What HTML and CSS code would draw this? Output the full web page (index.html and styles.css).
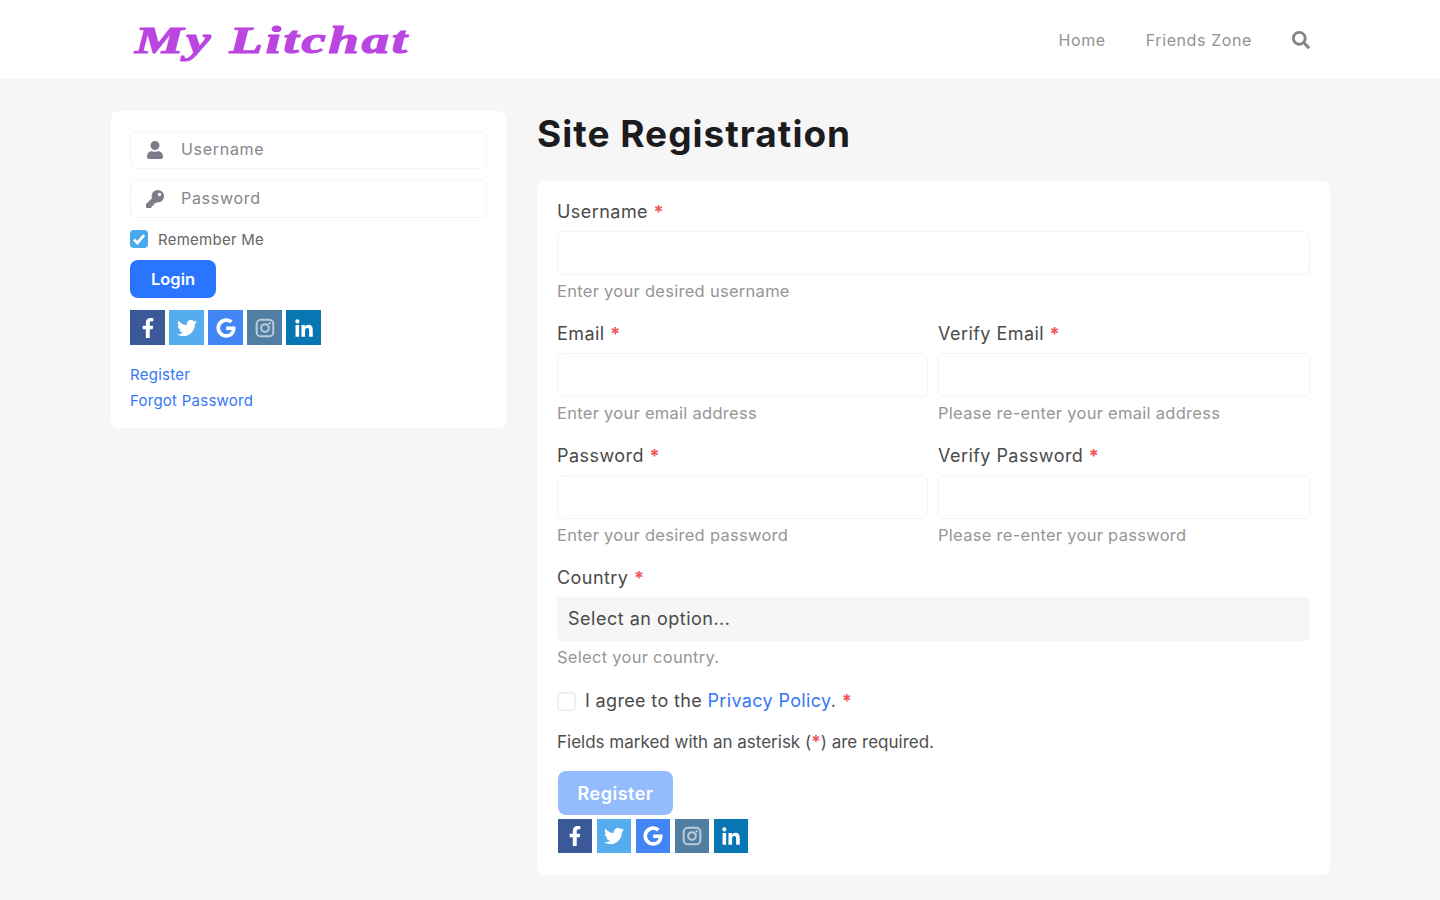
FILE: index.html
```html
<!DOCTYPE html>
<html>
<head>
    <title>My Litchat - Site Registration</title>
    <meta name="viewport" content="width=device-width, initial-scale=1.0">
    <link rel="stylesheet" href="styles.css">
</head>
<body>
    <svg class="defs" width="0" height="0">
        <symbol id="i-fb" viewBox="0 0 320 512"><path d="M279.14 288l14.22-92.66h-88.91v-60.13c0-25.35 12.42-50.06 52.24-50.06h40.42V6.26S260.43 0 225.36 0c-73.22 0-121.08 44.38-121.08 124.72v70.62H22.89V288h81.39v224h100.17V288z"/></symbol>
        <symbol id="i-tw" viewBox="0 0 512 512"><path d="M459.37 151.716c.325 4.548.325 9.097.325 13.645 0 138.72-105.583 298.558-298.558 298.558-59.452 0-114.68-17.219-161.137-47.106 8.447.974 16.568 1.299 25.34 1.299 49.055 0 94.213-16.568 130.274-44.832-46.132-.975-84.792-31.188-98.112-72.772 6.498.974 12.995 1.624 19.818 1.624 9.421 0 18.843-1.3 27.614-3.573-48.081-9.747-84.143-51.98-84.143-102.985v-1.299c13.969 7.797 30.214 12.67 47.431 13.319-28.264-18.843-46.781-51.005-46.781-87.391 0-19.492 5.197-37.36 14.294-52.954 51.655 63.675 129.3 105.258 216.365 109.807-1.624-7.797-2.599-15.918-2.599-24.04 0-57.828 46.782-104.934 104.934-104.934 30.213 0 57.502 12.67 76.67 33.137 23.715-4.548 46.456-13.32 66.599-25.34-7.798 24.366-24.366 44.833-46.132 57.827 21.117-2.273 41.584-8.122 60.426-16.243-14.292 20.791-32.161 39.308-52.628 54.253z"/></symbol>
        <symbol id="i-g" viewBox="0 0 488 512"><path d="M488 261.8C488 403.3 391.1 504 248 504 110.8 504 0 393.2 0 256S110.8 8 248 8c66.8 0 123 24.5 166.3 64.9l-67.5 64.9C258.5 52.6 94.3 116.6 94.3 256c0 86.5 69.1 156.6 153.7 156.6 98.2 0 135-70.4 140.8-106.9H248v-85.3h236.1c2.3 12.7 3.9 24.9 3.9 41.4z"/></symbol>
        <symbol id="i-ig" viewBox="0 0 24 24"><rect x="2" y="2" width="20" height="20" rx="5" fill="none" stroke="currentColor" stroke-width="2.4"/><circle cx="12" cy="12" r="4.6" fill="none" stroke="currentColor" stroke-width="2.4"/><circle cx="17.6" cy="6.4" r="1.4"/></symbol>
        <symbol id="i-in" viewBox="0 0 448 512"><path transform="translate(0 32)" d="M100.28 448H7.4V148.9h92.88zM53.79 108.1C24.09 108.1 0 83.5 0 53.8a53.79 53.79 0 0 1 107.58 0c0 29.7-24.1 54.3-53.79 54.3zM447.9 448h-92.68V302.4c0-34.7-.7-79.2-48.29-79.2-48.29 0-55.69 37.7-55.69 76.7V448h-92.78V148.9h89.08v40.8h1.3c12.4-23.5 42.69-48.3 87.88-48.3 94 0 111.28 61.9 111.28 142.3V448z"/></symbol>
        <symbol id="i-user" viewBox="0 0 448 512"><path d="M224 256c70.7 0 128-57.3 128-128S294.7 0 224 0 96 57.3 96 128s57.3 128 128 128zm89.6 32h-16.7c-22.2 10.2-46.9 16-72.9 16s-50.6-5.8-72.9-16h-16.7C60.2 288 0 348.2 0 422.4V464c0 26.5 21.5 48 48 48h352c26.5 0 48-21.5 48-48v-41.6c0-74.2-60.2-134.4-134.4-134.4z"/></symbol>
        <symbol id="i-key" viewBox="0 0 512 512"><path d="M512 176.001C512 273.203 433.202 352 336 352c-11.22 0-22.19-1.062-32.827-3.069l-24.012 27.014A23.999 23.999 0 0 1 261.223 384H224v40c0 13.255-10.745 24-24 24h-40v40c0 13.255-10.745 24-24 24H24c-13.255 0-24-10.745-24-24v-78.059c0-6.365 2.529-12.47 7.029-16.971l161.802-161.802C163.108 213.814 160 195.271 160 176 160 78.798 238.797.001 335.999 0 433.488-.001 512 78.511 512 176.001zM336 128c0 26.51 21.49 48 48 48s48-21.49 48-48-21.49-48-48-48-48 21.49-48 48z"/></symbol>
        <symbol id="i-search" viewBox="0 0 512 512"><path d="M505 442.7L405.3 343c-4.5-4.5-10.6-7-17-7H372c27.6-35.3 44-79.7 44-128C416 93.1 322.9 0 208 0S0 93.1 0 208s93.1 208 208 208c48.3 0 92.7-16.4 128-44v16.3c0 6.4 2.5 12.5 7 17l99.7 99.7c9.4 9.4 24.6 9.4 33.9 0l28.3-28.3c9.4-9.4 9.4-24.6.1-34zM208 336c-70.7 0-128-57.2-128-128 0-70.7 57.2-128 128-128 70.7 0 128 57.2 128 128 0 70.7-57.2 128-128 128z"/></symbol>
    </svg>

    <header class="topbar">
        <div class="topbar-inner">
            <a class="logo" href="#">My Litchat</a>
            <nav class="menu">
                <a href="#">Home</a>
                <a href="#">Friends Zone</a>
                <a href="#" class="menu-search"><svg><use href="#i-search"/></svg></a>
            </nav>
        </div>
    </header>

    <div class="wrap">
        <aside class="card login">
            <div class="login-field">
                <svg class="user-icon"><use href="#i-user"/></svg>
                <input type="text" placeholder="Username">
            </div>
            <div class="login-field">
                <svg class="key-icon"><use href="#i-key"/></svg>
                <input type="password" placeholder="Password">
            </div>
            <label class="remember">
                <span class="tick"><svg viewBox="0 0 16 16"><path d="M3.5 8.5l3 3 6-7" fill="none" stroke="#fff" stroke-width="2.4"/></svg></span>
                Remember Me
            </label>
            <button class="btn btn-login" type="button">Login</button>
            <div class="social social-login">
                <a class="fb" href="#"><svg><use href="#i-fb"/></svg></a>
                <a class="tw" href="#"><svg><use href="#i-tw"/></svg></a>
                <a class="gg" href="#"><svg><use href="#i-g"/></svg></a>
                <a class="ig" href="#"><svg><use href="#i-ig"/></svg></a>
                <a class="li" href="#"><svg><use href="#i-in"/></svg></a>
            </div>
            <div class="login-links">
                <a href="#">Register</a>
                <a href="#">Forgot Password</a>
            </div>
        </aside>

        <main class="content">
            <h1>Site Registration</h1>
            <form class="card form">
                <div class="field">
                    <label>Username <b>*</b></label>
                    <input type="text">
                    <small>Enter your desired username</small>
                </div>
                <div class="two">
                    <div class="field">
                        <label>Email <b>*</b></label>
                        <input type="text">
                        <small>Enter your email address</small>
                    </div>
                    <div class="field">
                        <label>Verify Email <b>*</b></label>
                        <input type="text">
                        <small>Please re-enter your email address</small>
                    </div>
                </div>
                <div class="two">
                    <div class="field">
                        <label>Password <b>*</b></label>
                        <input type="password">
                        <small>Enter your desired password</small>
                    </div>
                    <div class="field">
                        <label>Verify Password <b>*</b></label>
                        <input type="password">
                        <small>Please re-enter your password</small>
                    </div>
                </div>
                <div class="field">
                    <label>Country <b>*</b></label>
                    <div class="select">Select an option...</div>
                    <small>Select your country.</small>
                </div>
                <label class="agree">
                    <span class="box"></span>
                    <span>I agree to the <a href="#">Privacy Policy</a>. <b>*</b></span>
                </label>
                <p class="note">Fields marked with an asterisk (<b>*</b>) are required.</p>
                <button class="btn btn-register" type="button">Register</button>
                <div class="social social-form">
                    <a class="fb" href="#"><svg><use href="#i-fb"/></svg></a>
                    <a class="tw" href="#"><svg><use href="#i-tw"/></svg></a>
                    <a class="gg" href="#"><svg><use href="#i-g"/></svg></a>
                    <a class="ig" href="#"><svg><use href="#i-ig"/></svg></a>
                    <a class="li" href="#"><svg><use href="#i-in"/></svg></a>
                </div>
            </form>
        </main>
    </div>
</body>
</html>
```

FILE: styles.css
```css
* {
    box-sizing: border-box;
}

body {
    margin: 0;
    background-color: #f6f6f7;
    color: #3a3a3a;
    font-family: Inter, "Open Sans", sans-serif;
    font-size: 16px;
}

a {
    text-decoration: none;
}

.defs {
    position: absolute;
}

.topbar {
    height: 79px;
    background-color: #fff;
}

.topbar-inner {
    width: 1218px;
    height: 100%;
    margin-left: 111px;
    display: flex;
    justify-content: space-between;
    align-items: center;
    padding: 0 19px 0 24px;
}

.logo {
    color: #bb45e0;
    font-family: "Liberation Serif", serif;
    font-size: 38px;
    font-weight: bold;
    font-style: italic;
    letter-spacing: 2px;
    -webkit-text-stroke: 1.2px #bb45e0;
    white-space: nowrap;
    transform: scaleX(1.43);
    transform-origin: left center;
}

.menu {
    display: flex;
    align-items: center;
    gap: 40px;
}

.menu a {
    color: #939393;
    font-size: 16px;
    letter-spacing: .6px;
}

.menu-search {
    display: flex;
}

.menu-search svg {
    width: 18px;
    height: 18px;
    fill: #858585;
}

.wrap {
    width: 1219px;
    margin-left: 111px;
    padding-top: 32px;
    display: flex;
    gap: 31px;
    align-items: flex-start;
}

.card {
    background-color: #fff;
    border-radius: 8px;
}

/* login box */
.login {
    width: 395px;
    flex: none;
    padding: 20px 19px 14px;
}

.login-field {
    height: 38px;
    margin-bottom: 11px;
    border: 1px solid #f4f4f6;
    border-radius: 6px;
    display: flex;
    align-items: center;
    padding-left: 15px;
}

.login-field svg {
    width: 18px;
    height: 18px;
    fill: #7c7c88;
    flex: none;
}

.login-field input {
    border: 0;
    outline: 0;
    background: none;
    margin-left: 15px;
    margin-bottom: 2px;
    width: 280px;
    font: inherit;
    font-size: 16px;
    letter-spacing: .7px;
}

.login-field input::placeholder {
    color: #85858c;
    opacity: 1;
}

.remember {
    height: 20px;
    display: flex;
    align-items: center;
    gap: 10px;
    font-size: 15px;
    letter-spacing: .25px;
    color: #666;
}

.tick {
    width: 18px;
    height: 18px;
    border-radius: 4px;
    background-color: #4aa8ee;
    display: flex;
}

.btn {
    display: block;
    border: 0;
    border-radius: 8px;
    color: #fff;
    font: inherit;
    font-weight: 600;
    padding: 0;
}

.btn-login {
    width: 86px;
    height: 38px;
    margin-top: 11px;
    background-color: #2a75ff;
    font-size: 16.5px;
}

.social {
    display: flex;
    gap: 4px;
}

.social a {
    width: 35px;
    height: 35px;
    display: flex;
    align-items: center;
    justify-content: center;
    color: #fff;
}

.social svg {
    width: 20px;
    height: 20px;
    fill: currentColor;
}

.social .fb { background-color: #3b5998; }
.social .tw { background-color: #55acee; }
.social .gg { background-color: #4285f4; }
.social .ig { background-color: #517fa4; }
.social .li { background-color: #0976b4; }

.social .ig svg {
    opacity: .6;
}

.social-login {
    margin-top: 12px;
}

.login-links {
    margin-top: 17px;
}

.login-links a {
    display: block;
    line-height: 26px;
    color: #3578f6;
    font-size: 15px;
    letter-spacing: .25px;
}

/* registration form */
.content {
    width: 793px;
}

h1 {
    margin: 0 0 24px;
    color: #1c1c1e;
    font-size: 37px;
    letter-spacing: 1px;
    line-height: 46px;
    font-weight: 700;
}

.form {
    height: 694px;
    padding: 19px 20px 22px;
}

.field {
    margin-bottom: 21px;
}

.field label {
    display: block;
    line-height: 24px;
    margin-bottom: 7px;
    color: #4a4a4a;
    font-size: 18px;
    letter-spacing: .45px;
}

b {
    color: #f0565c;
    font-weight: 700;
}

.field input {
    display: block;
    width: 100%;
    height: 44px;
    border: 1px solid #f4f4f6;
    border-radius: 6px;
    background-color: #fff;
    outline: 0;
}

.field small {
    display: block;
    margin-top: 6px;
    line-height: 20px;
    color: #969696;
    font-size: 16.5px;
    letter-spacing: .28px;
}

.two {
    display: grid;
    grid-template-columns: 371px 372px;
    column-gap: 10px;
}

.select {
    height: 44px;
    padding-left: 11px;
    border-radius: 4px;
    background-color: #f6f6f7;
    color: #4a4a4a;
    line-height: 44px;
    font-size: 18px;
    letter-spacing: .5px;
}

.agree {
    height: 24px;
    display: flex;
    align-items: center;
    gap: 9px;
    color: #4a4a4a;
    font-size: 18px;
    letter-spacing: .35px;
}

.agree a {
    color: #3578f6;
}

.box {
    width: 19px;
    height: 19px;
    border: 2px solid #f0f0f1;
    border-radius: 4px;
    margin-top: 2px;
}

.note {
    margin: 18px 0 0;
    line-height: 24px;
    color: #4f4f4f;
    font-size: 17px;
}

.btn-register {
    width: 115px;
    height: 44px;
    margin-top: 17px;
    margin-left: 1px;
    background-color: #95bbff;
    font-size: 18px;
    letter-spacing: .5px;
}

.social-form {
    margin-top: 4px;
    margin-left: 1px;
    gap: 5px;
}

.social-form a {
    width: 34px;
    height: 34px;
}
```
